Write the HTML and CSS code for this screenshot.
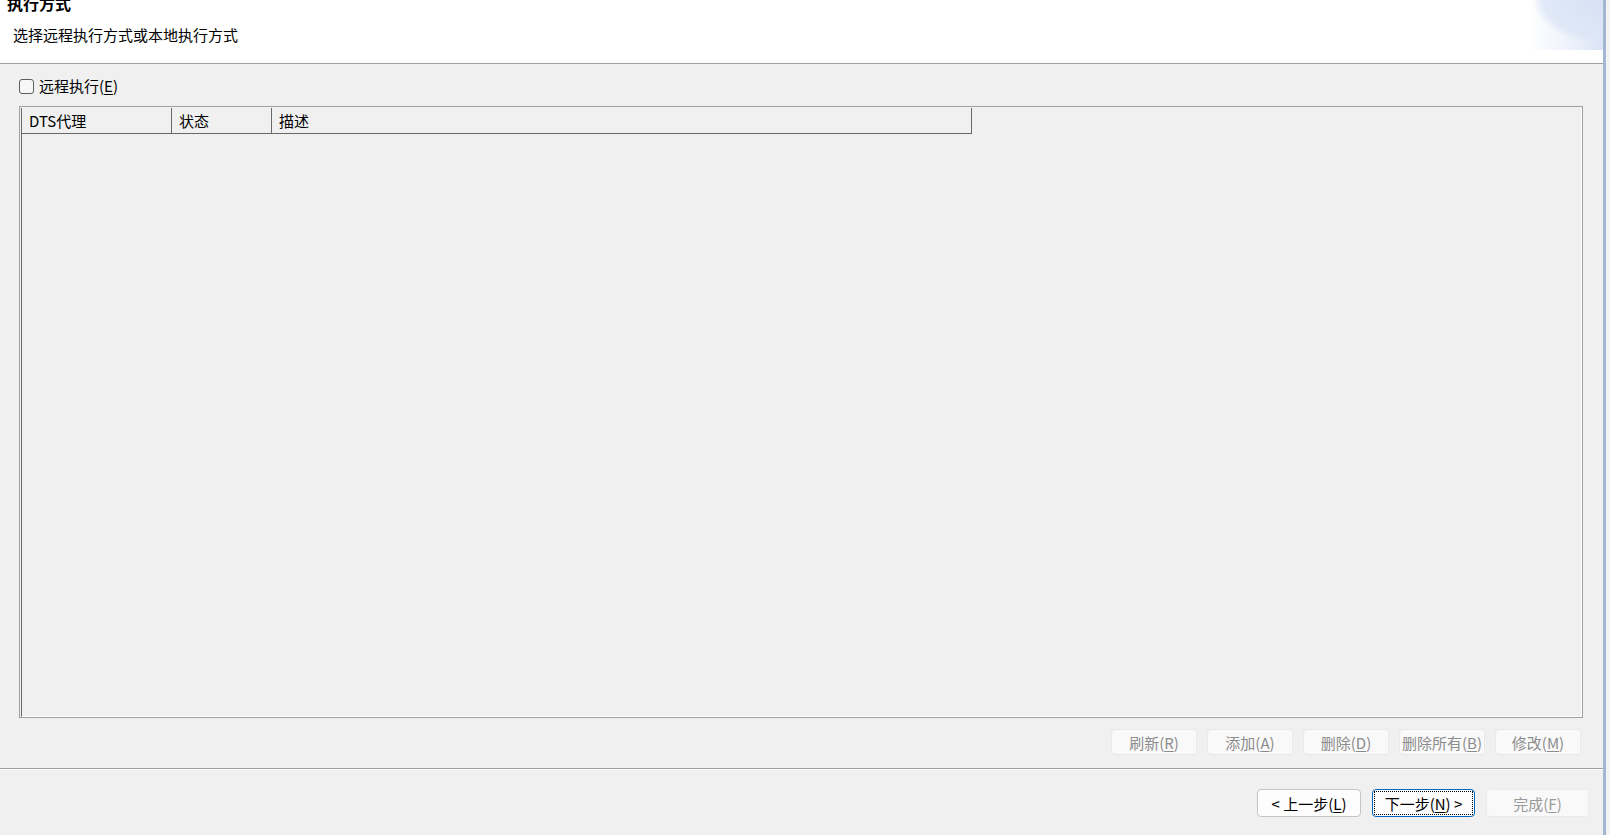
FILE: index.html
```html
<!DOCTYPE html>
<html lang="zh-CN">
<head>
<meta charset="utf-8">
<title>执行方式</title>
<link rel="stylesheet" href="styles.css">
</head>
<body>
<div class="app">
  <div class="main">
    <div class="header">
      <div class="title">执行方式</div>
      <div class="subtitle">选择远程执行方式或本地执行方式</div>
    </div>
    <div class="content">
      <label class="check-row">
        <span class="checkbox"></span>
        <span class="check-label">远程执行(<u>E</u>)</span>
      </label>
      <div class="table">
        <div class="grid">
          <div class="thead">
            <div class="th col-agent">DTS代理</div>
            <div class="th col-status">状态</div>
            <div class="th col-desc">描述</div>
          </div>
        </div>
      </div>
      <div class="actions">
        <button class="btn btn-disabled">刷新(<u>R</u>)</button>
        <button class="btn btn-disabled">添加(<u>A</u>)</button>
        <button class="btn btn-disabled">删除(<u>D</u>)</button>
        <button class="btn btn-disabled">删除所有(<u>B</u>)</button>
        <button class="btn btn-disabled">修改(<u>M</u>)</button>
      </div>
    </div>
    <div class="separator"></div>
    <div class="footer">
      <button class="btn btn-nav">&lt; 上一步(<u>L</u>)</button>
      <button class="btn btn-nav btn-focus"><span class="focus-ring">下一步(<u>N</u>) &gt;</span></button>
      <button class="btn btn-nav btn-disabled">完成(<u>F</u>)</button>
    </div>
  </div>
  <div class="edge"></div>
  <div class="edge-outer"></div>
</div>
</body>
</html>
```
FILE: styles.css
```css
html, body {
  margin: 0;
  padding: 0;
}
body {
  font-family: "Noto Sans CJK SC", "Noto Sans", sans-serif;
  font-size: 15px;
  color: #000;
  background: #f0f0f0;
  overflow: hidden;
}
.app {
  display: flex;
  width: 1610px;
  height: 835px;
}
.main {
  width: 1603px;
  display: flex;
  flex-direction: column;
  background: #f0f0f0;
}
.edge {
  width: 3px;
  background: #a3b7d2;
}
.edge-outer {
  width: 4px;
  background: #f3f3f3;
}
.header {
  box-sizing: border-box;
  height: 64px;
  padding-left: 7px;
  background-color: #fff;
  background-image:
    radial-gradient(ellipse 70px 44px at 100% 0%, rgba(214, 225, 244, 0.95) 0%, rgba(222, 231, 247, 0.9) 85%, rgba(255, 255, 255, 0) 100%),
    linear-gradient(90deg, rgba(255, 255, 255, 0) 0%, rgba(233, 238, 250, 0.7) 50%, #dbe4f5 100%);
  background-repeat: no-repeat;
  background-position: right top, right top;
  background-size: 75px 50px, 75px 50px;
  border-bottom: 1px solid #a0a0a0;
  overflow: hidden;
}
.title {
  font-weight: bold;
  font-size: 16px;
  line-height: 20px;
  margin-top: -7px;
}
.subtitle {
  margin-top: 12px;
  margin-left: 6px;
  line-height: 20px;
}
.content {
  display: flex;
  flex-direction: column;
  padding: 0 20px 0 19px;
}
.check-row {
  display: flex;
  align-items: center;
  gap: 5px;
  height: 16px;
  margin-top: 14px;
  line-height: 16px;
}
.checkbox {
  box-sizing: border-box;
  width: 15px;
  height: 15px;
  border: 1px solid #5c5c5c;
  border-radius: 3px;
  background: #f7f7f7;
}
.table {
  box-sizing: border-box;
  margin-top: 12px;
  height: 612px;
  border: 1px solid #a0a0a0;
  padding: 1px 0 0 1px;
  display: flex;
}
.grid {
  flex: 1;
  border-left: 1px solid #696969;
  border-right: 1px solid #fff;
  border-bottom: 1px solid #fff;
  background: #f0f0f0;
}
.thead {
  display: flex;
  height: 26px;
}
.th {
  box-sizing: border-box;
  height: 26px;
  line-height: 25px;
  padding-left: 7px;
  border-right: 1px solid #696969;
  border-bottom: 1px solid #696969;
}
.col-agent { width: 150px; }
.col-status { width: 100px; }
.col-desc { width: 700px; }
.actions {
  display: flex;
  justify-content: flex-end;
  gap: 10px;
  margin-top: 11px;
  padding-right: 2px;
}
.btn {
  box-sizing: border-box;
  font-family: inherit;
  font-size: 15px;
  padding: 0;
  margin: 0;
  border-radius: 4px;
  display: flex;
  align-items: center;
  justify-content: center;
}
.actions .btn {
  width: 86px;
  height: 26px;
}
.btn-disabled {
  background: #f9f9f9;
  border: 1px solid #e9e9e9;
  color: #8c8c8c;
}
.separator {
  margin-top: 13px;
  height: 0;
  border-top: 1px solid #a0a0a0;
  border-bottom: 1px solid #fff;
}
.footer {
  display: flex;
  justify-content: flex-end;
  gap: 11px;
  margin-top: 19px;
  padding-right: 14px;
}
.btn-nav {
  width: 103px;
  height: 28px;
  background: #fdfdfd;
  border: 1px solid #c4c4c4;
  color: #000;
}
.btn-nav:first-child {
  width: 104px;
}
.btn-nav.btn-disabled {
  background: #f9f9f9;
  border: 1px solid #ebebeb;
  color: #999;
}
.btn-focus {
  border: 1px solid #0067c0;
  padding: 1px;
}
.focus-ring {
  box-sizing: border-box;
  width: 100%;
  height: 100%;
  border: 1px dotted #000;
  display: flex;
  align-items: center;
  justify-content: center;
}
u {
  text-underline-offset: 2px;
}
```
